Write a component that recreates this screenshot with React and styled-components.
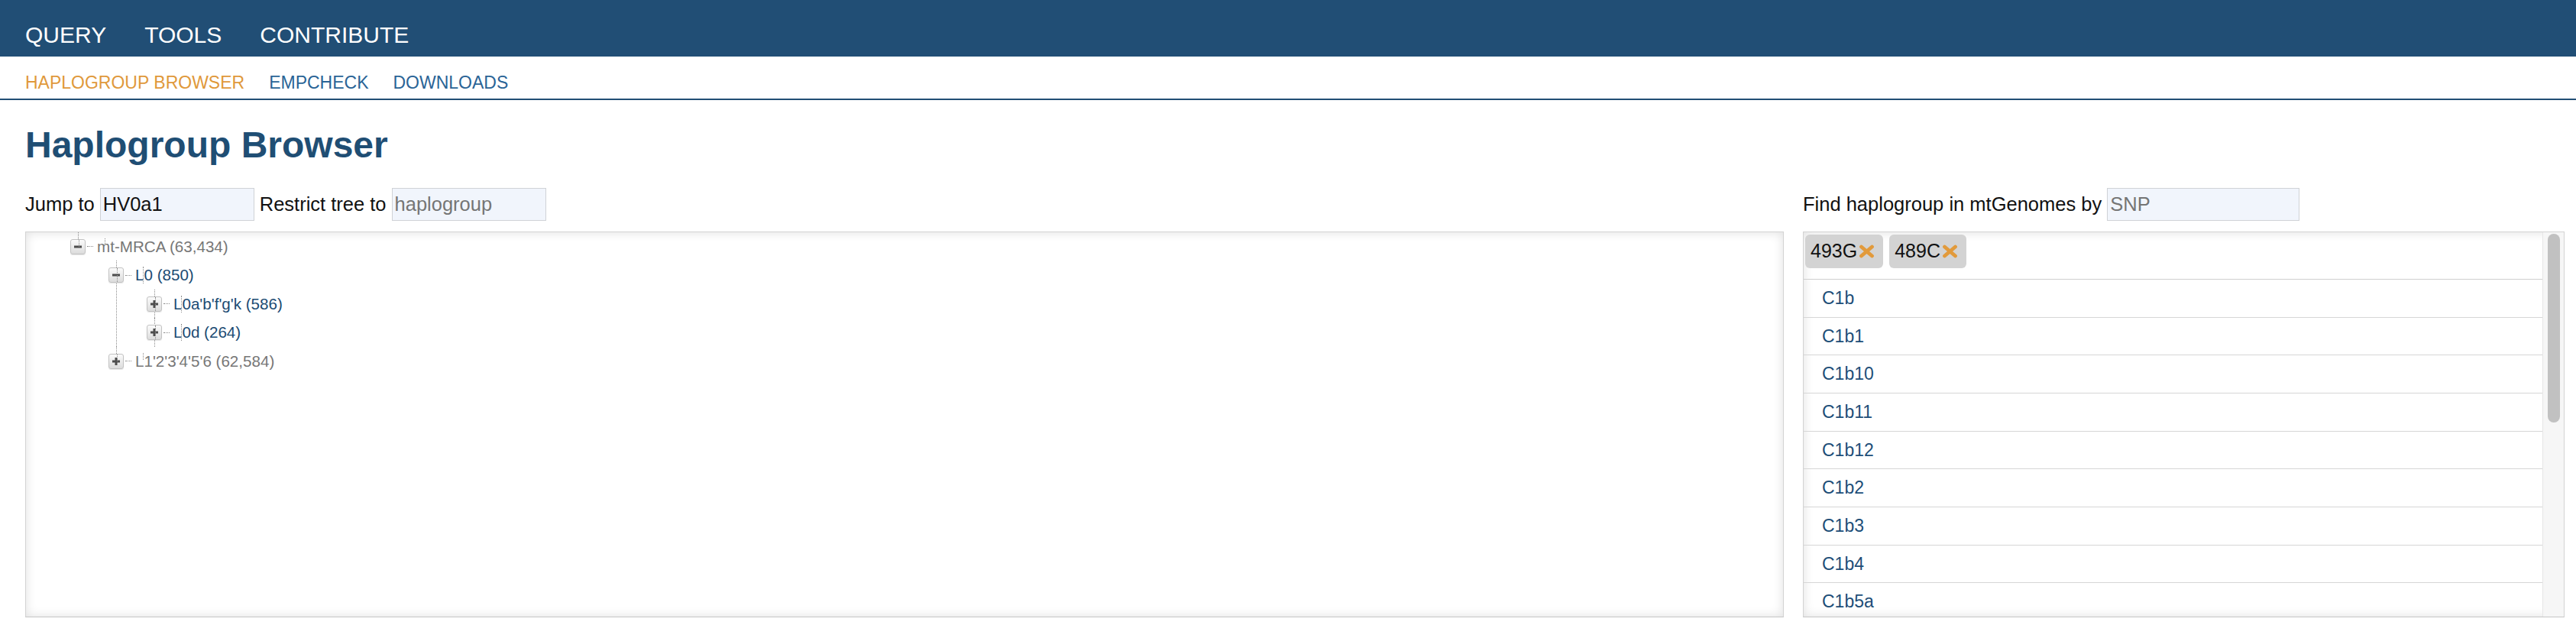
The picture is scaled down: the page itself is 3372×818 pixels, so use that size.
import React from 'react'
import styled, { createGlobalStyle } from 'styled-components'

const GlobalStyle = createGlobalStyle`
    html, body {
        margin: 0;
        padding: 0;
        background: #fff;
    }
    body {
        font-family: "Liberation Sans", Arial, sans-serif;
        color: #111;
    }
    * {
        box-sizing: border-box;
    }
`;

const NAV = ['QUERY', 'TOOLS', 'CONTRIBUTE']

const SUBNAV = [
    { label: 'HAPLOGROUP BROWSER', active: true },
    { label: 'EMPCHECK' },
    { label: 'DOWNLOADS' },
]

const TREE = {
    label: 'mt-MRCA (63,434)',
    muted: true,
    open: true,
    children: [
        {
            label: 'L0 (850)',
            open: true,
            children: [
                { label: "L0a'b'f'g'k (586)" },
                { label: 'L0d (264)' },
            ],
        },
        { label: "L1'2'3'4'5'6 (62,584)", muted: true, caret: true },
    ],
}

const SNPS = ['493G', '489C']

const RESULTS = ['C1b', 'C1b1', 'C1b10', 'C1b11', 'C1b12', 'C1b2', 'C1b3', 'C1b4', 'C1b5a', 'C1b5b', 'C1b6']

// minus / plus glyph drawn inside the tree toggle box
const ToggleGlyph = ({ open }) => (
    <svg width="18" height="18" viewBox="0 0 18 18">
        <rect x="4" y="7.5" width="10" height="3" fill="#4d4d4d" />
        {!open && <rect x="7.5" y="4" width="3" height="10" fill="#4d4d4d" />}
    </svg>
)

const TreeNode = ({ node, last }) => (
    <Node $last={last}>
        <NodeRow>
            <Toggle>
                <ToggleGlyph open={node.open} />
            </Toggle>
            <Connector />
            <NodeLabel $muted={node.muted} $caret={node.caret}>{node.label}</NodeLabel>
        </NodeRow>
        {node.children && node.open && (
            <Children>
                {node.children.map((child, i) => (
                    <TreeNode key={child.label} node={child} last={i === node.children.length - 1} />
                ))}
            </Children>
        )}
    </Node>
)

const CloseIcon = () => (
    <svg width="21" height="18" viewBox="0 0 21 18">
        <path d="M3.5 3 L17.5 15 M17.5 3 L3.5 15" stroke="#e29a3b" strokeWidth="4.8" strokeLinecap="round" />
    </svg>
)

const App = () => {
    return (
        <>
            <GlobalStyle />
            <TopNav>
                {NAV.map(item => <NavItem key={item}>{item}</NavItem>)}
            </TopNav>
            <SubNav>
                {SUBNAV.map(item => (
                    <SubNavItem key={item.label} $active={item.active}>{item.label}</SubNavItem>
                ))}
            </SubNav>
            <Title>Haplogroup Browser</Title>
            <Columns>
                <Column>
                    <Controls>
                        <FieldLabel>Jump to</FieldLabel>
                        <Field $w={202} defaultValue="HV0a1" />
                        <FieldLabel>Restrict tree to</FieldLabel>
                        <Field $w={202} placeholder="haplogroup" />
                    </Controls>
                    <Panel>
                        <Tree>
                            <TreeNode node={TREE} last />
                        </Tree>
                    </Panel>
                </Column>
                <Column>
                    <Controls>
                        <FieldLabel>Find haplogroup in mtGenomes by</FieldLabel>
                        <Field $w={252} placeholder="SNP" />
                    </Controls>
                    <Panel $row>
                        <ListPane>
                            <ChipRow>
                                {SNPS.map(snp => (
                                    <Chip key={snp}>
                                        {snp}
                                        <CloseIcon />
                                    </Chip>
                                ))}
                            </ChipRow>
                            {RESULTS.map(r => <ResultRow key={r}>{r}</ResultRow>)}
                        </ListPane>
                        <ScrollTrack>
                            <ScrollThumb />
                        </ScrollTrack>
                    </Panel>
                </Column>
            </Columns>
        </>
    )
}

export default App

const TopNav = styled.nav`
    display: flex;
    gap: 50px;
    height: 74px;
    padding: 31px 0 0 33px;
    background: #214e75;
`;

const NavItem = styled.a`
    color: #fff;
    font-size: 30px;
    line-height: 30px;
    cursor: pointer;
`;

const SubNav = styled.div`
    display: flex;
    gap: 32px;
    height: 57px;
    padding: 22.5px 0 0 33px;
    border-bottom: 2px solid #214e75;
`;

const SubNavItem = styled.a`
    color: ${p => (p.$active ? '#e0993b' : '#2a6496')};
    font-size: 23px;
    line-height: 23px;
    cursor: pointer;
`;

const Title = styled.h1`
    margin: 35.4px 0 0;
    padding-left: 33px;
    color: #1f4e74;
    font-size: 48px;
    line-height: 48px;
    font-weight: bold;
`;

const Columns = styled.div`
    display: grid;
    grid-template-columns: 1fr 997px;
    column-gap: 25px;
    padding: 0 15px 0 33px;
    margin-top: 31.6px;
`;

const Column = styled.div`
    display: flex;
    flex-direction: column;
    gap: 14px;
    min-width: 0;
`;

const Controls = styled.div`
    display: flex;
    align-items: center;
    gap: 7px;
    height: 43px;
`;

const FieldLabel = styled.label`
    font-size: 25.5px;
    color: #111;
    white-space: nowrap;
`;

const Field = styled.input`
    width: ${p => p.$w}px;
    height: 43px;
    padding: 0 3px;
    border: 1px solid #cfd2d6;
    background: #f1f5fc;
    font-family: "Liberation Sans", Arial, sans-serif;
    font-size: 25.5px;
    color: #111;
    outline: none;

    ::placeholder {
        color: #7a7a7a;
    }
`;

const Panel = styled.div`
    display: ${p => (p.$row ? 'flex' : 'block')};
    height: 505px;
    border: 1px solid #d3d3d3;
    border-bottom-color: #c6c6c6;
    background: #fff;
    box-shadow: inset 0 0 14px rgba(0, 0, 0, 0.13);
    overflow: hidden;
`;

const Tree = styled.ul`
    list-style: none;
    margin: 0;
    padding: 0 0 0 58px;
`;

const Children = styled.ul`
    list-style: none;
    margin: 0 0 0 50px;
    padding: 0;
`;

const Node = styled.li`
    position: relative;

    ::before {
        content: "";
        position: absolute;
        left: 9.5px;
        top: 0;
        height: ${p => (p.$last ? '9px' : '100%')};
        border-left: 1px dotted #8a8a8a;
    }
`;

const NodeRow = styled.div`
    display: flex;
    align-items: center;
    height: 37.5px;
`;

const Toggle = styled.span`
    position: relative;
    z-index: 1;
    flex: none;
    display: flex;
    width: 20px;
    height: 20px;
    border: 1px solid #c2c2c2;
    border-radius: 3px;
    background: linear-gradient(180deg, #fbfbfb 0%, #dcdcdc 100%);
    box-shadow: 0 1px 1px rgba(0, 0, 0, 0.1);
`;

const Connector = styled.span`
    flex: none;
    width: 8px;
    margin-left: 2px;
    border-top: 1px dotted #8a8a8a;
`;

const NodeLabel = styled.span`
    position: relative;
    margin-left: 5px;
    font-size: 20.6px;
    line-height: 22px;
    color: ${p => (p.$muted ? '#777' : '#1b4b73')};
    white-space: nowrap;

    ::before {
        content: "";
        display: ${p => (p.$caret ? 'block' : 'none')};
        position: absolute;
        left: -5px;
        top: -7px;
        width: 1px;
        height: 28px;
        background: #000;
    }
`;

const ListPane = styled.div`
    flex: 1;
    min-width: 0;
    overflow: hidden;
`;

const ChipRow = styled.div`
    display: flex;
    align-items: flex-start;
    gap: 8px;
    height: 62px;
    padding: 3px 2px;
    border-bottom: 1px solid #cfcfcf;
`;

const Chip = styled.span`
    display: flex;
    align-items: center;
    gap: 2px;
    height: 44px;
    padding: 0 11px 0 7px;
    border-radius: 6px;
    background: #d3d3d3;
    font-size: 25px;
    color: #111;
`;

const ResultRow = styled.div`
    display: flex;
    align-items: center;
    height: 49.7px;
    padding-left: 24px;
    border-bottom: 1px solid #d6d6d6;
    font-size: 23px;
    color: #1d4e78;
`;

const ScrollTrack = styled.div`
    flex: none;
    width: 28px;
    padding: 2px 0 0 6px;
    background: #f6f6f6;
    border-left: 1px solid #e6e6e6;
`;

const ScrollThumb = styled.div`
    width: 16px;
    height: 247px;
    border-radius: 8px;
    background: #c1c1c1;
`;
